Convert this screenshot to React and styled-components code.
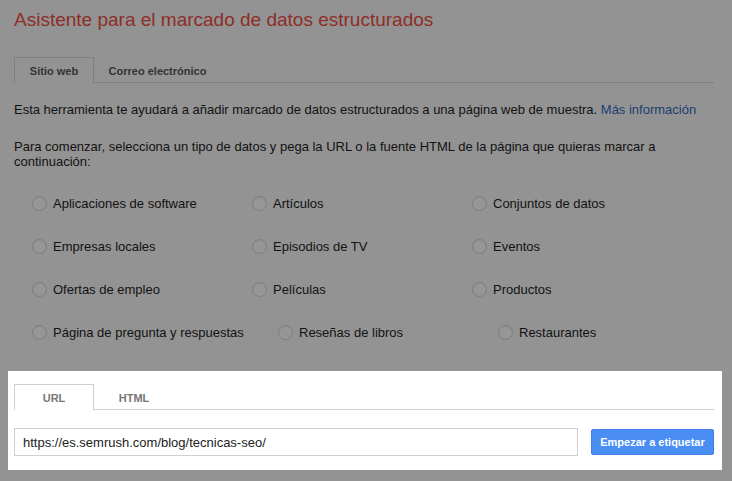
import React, { useState } from 'react';
import styled, { createGlobalStyle } from 'styled-components';

const GlobalStyle = createGlobalStyle`
  body {
    margin: 0;
    background: #939393;
    font-family: "Liberation Sans", Arial, sans-serif;
    color: #121212;
  }
`;

// the dimmed part of the page
const Page = styled.div`
  padding: 8px 0 0 14px;
  width: 700px;
`;

const Title = styled.h1`
  margin: 0;
  font-size: 19px;
  line-height: 24px;
  font-weight: normal;
  color: #8e2e28;
`;

const TabBar = styled.div`
  display: flex;
  height: 25px;
  margin-top: ${p => p.top || 0}px;
  border-bottom: 1px solid ${p => (p.light ? '#cfcfcf' : '#7f7f7f')};
`;

const Tab = styled.div`
  width: ${p => p.width}px;
  box-sizing: border-box;
  display: flex;
  align-items: center;
  justify-content: center;
  font-size: 11px;
  font-weight: bold;
  color: ${p => (p.light ? '#777' : '#333')};
  border: 1px solid transparent;
  border-bottom: none;
  margin-bottom: -1px;
  ${p =>
    p.active &&
    `
    border-color: ${p.light ? '#cfcfcf' : '#7f7f7f'};
    background: ${p.light ? '#fff' : '#939393'};
    height: 26px;
  `}
`;

const Text = styled.p`
  margin: ${p => p.top}px 0 0;
  font-size: 13px;
  line-height: 15px;
`;

const Link = styled.a`
  color: #1d3d70;
  text-decoration: none;
`;

const RadioGrid = styled.div`
  display: grid;
  grid-template-columns: ${p => p.cols};
  padding-left: 18px;
  margin-top: ${p => p.top || 0}px;
`;

const RadioItem = styled.label`
  display: flex;
  align-items: center;
  height: 43px;
  font-size: 13px;
  gap: 6px;
`;

const Circle = styled.span`
  width: 13px;
  height: 13px;
  border-radius: 50%;
  border: 1px solid #7e7e7e;
  background: ${p => (p.checked ? '#6a6a6a' : '#969696')};
  box-shadow: inset 0 1px 1px rgba(0, 0, 0, 0.06);
`;

// the highlighted part
const Spotlight = styled.section`
  margin: 17px 0 0 8px;
  width: 714px;
  box-sizing: border-box;
  background: #fff;
  padding: 13px 8px 14px 6px;
`;

const InputRow = styled.div`
  display: flex;
  align-items: center;
  gap: 13px;
  margin-top: 18px;
`;

const UrlInput = styled.input`
  width: 564px;
  height: 28px;
  box-sizing: border-box;
  border: 1px solid #d0d0d0;
  padding: 0 8px;
  font-family: "Liberation Sans", Arial, sans-serif;
  font-size: 13px;
  color: #222;
  outline: none;
`;

const StartButton = styled.button`
  width: 123px;
  height: 26px;
  border: 1px solid #3f80ea;
  border-radius: 2px;
  background: #4a8ef3;
  color: #fff;
  font-family: "Liberation Sans", Arial, sans-serif;
  font-size: 11px;
  font-weight: bold;
  padding: 0;
`;

const rows = [
  { cols: '220px 220px auto', items: ['Aplicaciones de software', 'Artículos', 'Conjuntos de datos'] },
  { cols: '220px 220px auto', items: ['Empresas locales', 'Episodios de TV', 'Eventos'] },
  { cols: '220px 220px auto', items: ['Ofertas de empleo', 'Películas', 'Productos'] },
  { cols: '246px 220px auto', items: ['Página de pregunta y respuestas', 'Reseñas de libros', 'Restaurantes'] },
];

export default function App() {
  const [selected, setSelected] = useState(null);
  const [url, setUrl] = useState('https://es.semrush.com/blog/tecnicas-seo/');

  return (
    <>
      <GlobalStyle />
      <Page>
        <Title>Asistente para el marcado de datos estructurados</Title>
        <TabBar top={25}>
          <Tab width={80} active>Sitio web</Tab>
          <Tab width={127}>Correo electrónico</Tab>
        </TabBar>
        <Text top={19}>
          Esta herramienta te ayudará a añadir marcado de datos estructurados a una página web de muestra.{' '}
          <Link href="#">Más información</Link>
        </Text>
        <Text top={22}>
          Para comenzar, selecciona un tipo de datos y pega la URL o la fuente HTML de la página que quieras marcar a
          continuación:
        </Text>
        {rows.map((row, i) => (
          <RadioGrid key={i} cols={row.cols} top={i === 0 ? 13 : 0}>
            {row.items.map(name => (
              <RadioItem key={name} onClick={() => setSelected(name)}>
                <Circle checked={selected === name} />
                {name}
              </RadioItem>
            ))}
          </RadioGrid>
        ))}
      </Page>
      <Spotlight>
        <TabBar light>
          <Tab width={80} active light>URL</Tab>
          <Tab width={80} light>HTML</Tab>
        </TabBar>
        <InputRow>
          <UrlInput value={url} onChange={e => setUrl(e.target.value)} />
          <StartButton>Empezar a etiquetar</StartButton>
        </InputRow>
      </Spotlight>
    </>
  );
}
